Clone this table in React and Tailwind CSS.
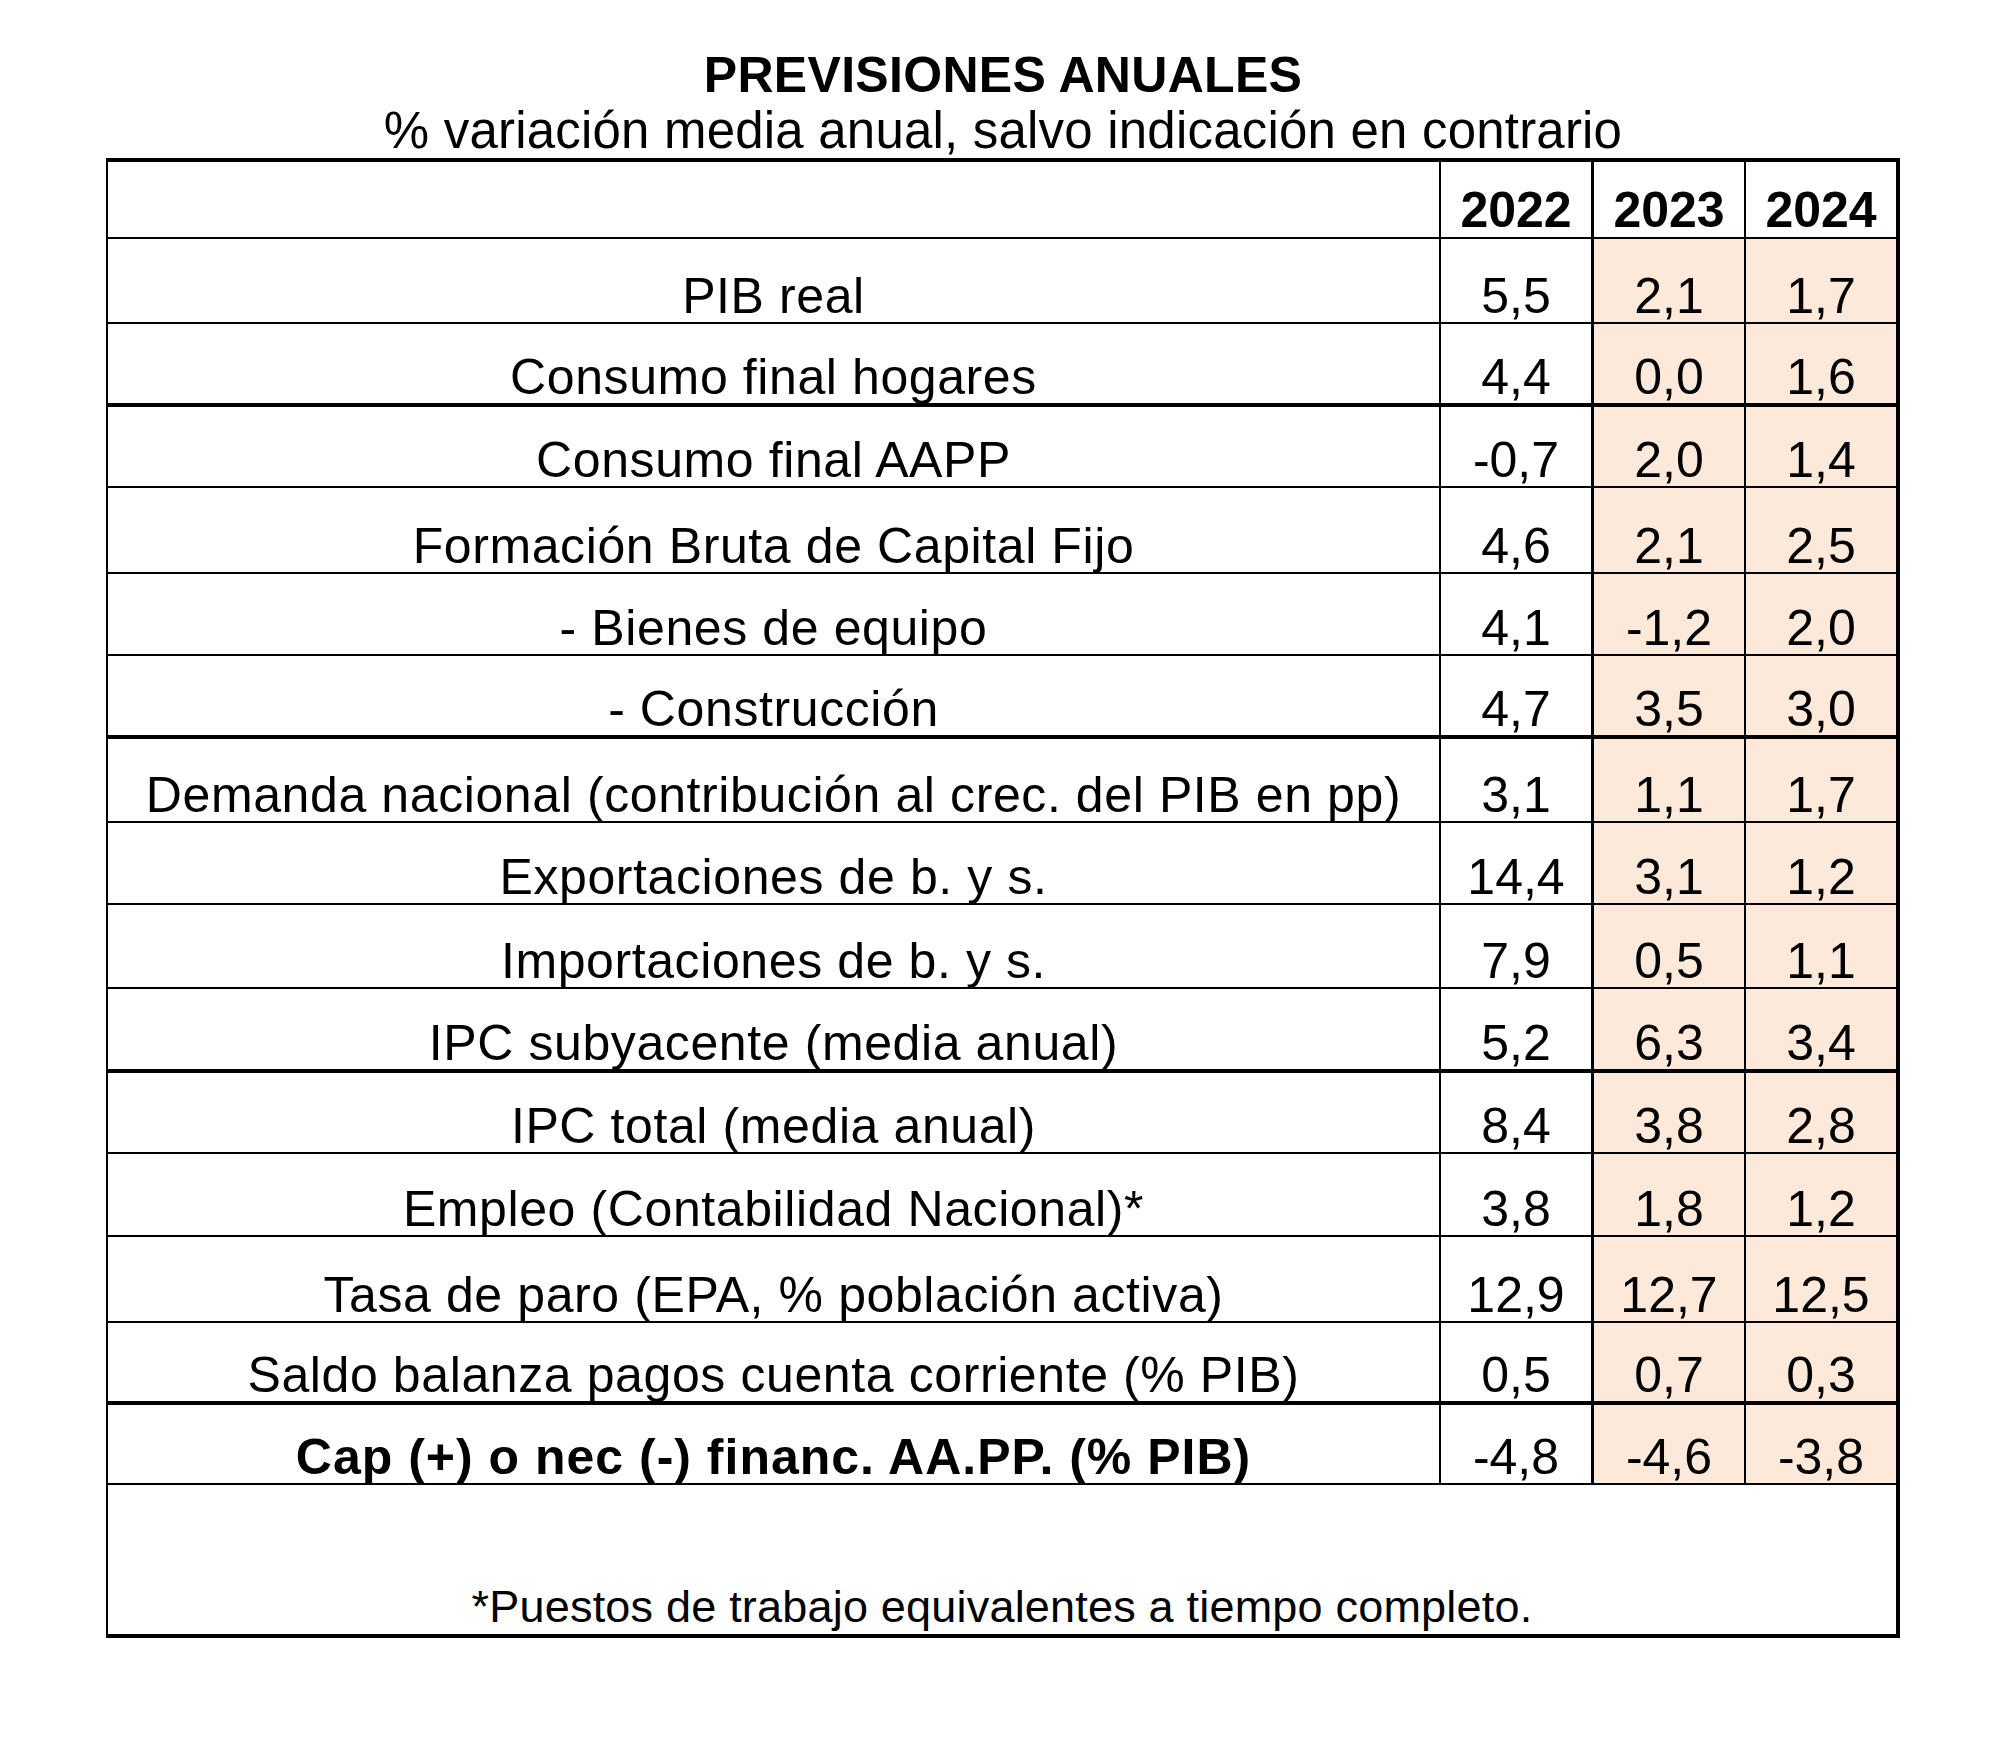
const rows = [
  { label: 'PIB real', h: 'h-[85px]', v: ['5,5', '2,1', '1,7'] },
  { label: 'Consumo final hogares', h: 'h-[83px]', v: ['4,4', '0,0', '1,6'], thick: true },
  { label: 'Consumo final AAPP', h: 'h-[81px]', v: ['-0,7', '2,0', '1,4'] },
  { label: 'Formación Bruta de Capital Fijo', h: 'h-[86px]', v: ['4,6', '2,1', '2,5'] },
  { label: '- Bienes de equipo', h: 'h-[82px]', v: ['4,1', '-1,2', '2,0'] },
  { label: '- Construcción', h: 'h-[83px]', v: ['4,7', '3,5', '3,0'], thick: true },
  { label: 'Demanda nacional (contribución al crec. del PIB en pp)', h: 'h-[84px]', v: ['3,1', '1,1', '1,7'] },
  { label: 'Exportaciones de b. y s.', h: 'h-[82px]', v: ['14,4', '3,1', '1,2'] },
  { label: 'Importaciones de b. y s.', h: 'h-[84px]', v: ['7,9', '0,5', '1,1'] },
  { label: 'IPC subyacente (media anual)', h: 'h-[84px]', v: ['5,2', '6,3', '3,4'], thick: true },
  { label: 'IPC total (media anual)', h: 'h-[81px]', v: ['8,4', '3,8', '2,8'] },
  { label: 'Empleo (Contabilidad Nacional)*', h: 'h-[83px]', v: ['3,8', '1,8', '1,2'] },
  { label: 'Tasa de paro (EPA, % población activa)', h: 'h-[86px]', v: ['12,9', '12,7', '12,5'] },
  { label: 'Saldo balanza pagos cuenta corriente (% PIB)', h: 'h-[82px]', v: ['0,5', '0,7', '0,3'], thick: true },
  { label: 'Cap (+) o nec (-) financ. AA.PP. (% PIB)', h: 'h-[80px]', v: ['-4,8', '-4,6', '-3,8'], bold: true },
];

function Row({ row }) {
  const cell = 'flex items-end justify-center pb-[1px] leading-none';
  return (
    <div className={`flex ${row.h} ${row.thick ? 'border-b-4' : 'border-b-2'} border-black`}>
      <div className={`${cell} flex-1 ${row.bold ? 'font-bold tracking-[1px]' : 'tracking-[0.6px]'}`}>{row.label}</div>
      <div className={`${cell} w-[152px] border-l-2 border-black`}>{row.v[0]}</div>
      <div className={`${cell} w-[153px] border-l-[3px] border-black bg-[#fde9d9]`}>{row.v[1]}</div>
      <div className={`${cell} w-[152px] border-l-2 border-black bg-[#fde9d9]`}>{row.v[2]}</div>
    </div>
  );
}

export default function App() {
  return (
    <div
      className="w-[2007px] h-[1760px] bg-white text-black"
      style={{ fontFamily: '"Liberation Sans", Arial, sans-serif' }}
    >
      <div className="ml-[106px] w-[1794px] pt-[50px]">
        <h1 className="text-center text-[50px] font-bold leading-none tracking-[0.3px]">PREVISIONES ANUALES</h1>
        <p className="mt-[5px] text-center text-[51px] leading-none tracking-[0.2px]">
          % variación media anual, salvo indicación en contrario
        </p>

        <div className="mt-[2px] border-t-4 border-b-4 border-l-2 border-r-4 border-black text-[50px]">
          <div className="flex h-[77px] border-b-2 border-black font-bold">
            <div className="flex-1" />
            <div className="flex w-[152px] items-end justify-center border-l-2 border-black pb-[2px] leading-none">2022</div>
            <div className="flex w-[153px] items-end justify-center border-l-[3px] border-black pb-[2px] leading-none">2023</div>
            <div className="flex w-[152px] items-end justify-center border-l-2 border-black pb-[2px] leading-none">2024</div>
          </div>

          {rows.map((row) => (
            <Row key={row.label} row={row} />
          ))}

          <div className="flex h-[149px] items-end justify-center pb-[5px] text-[45px] leading-none tracking-[0.2px]">
            *Puestos de trabajo equivalentes a tiempo completo.
          </div>
        </div>
      </div>
    </div>
  );
}
